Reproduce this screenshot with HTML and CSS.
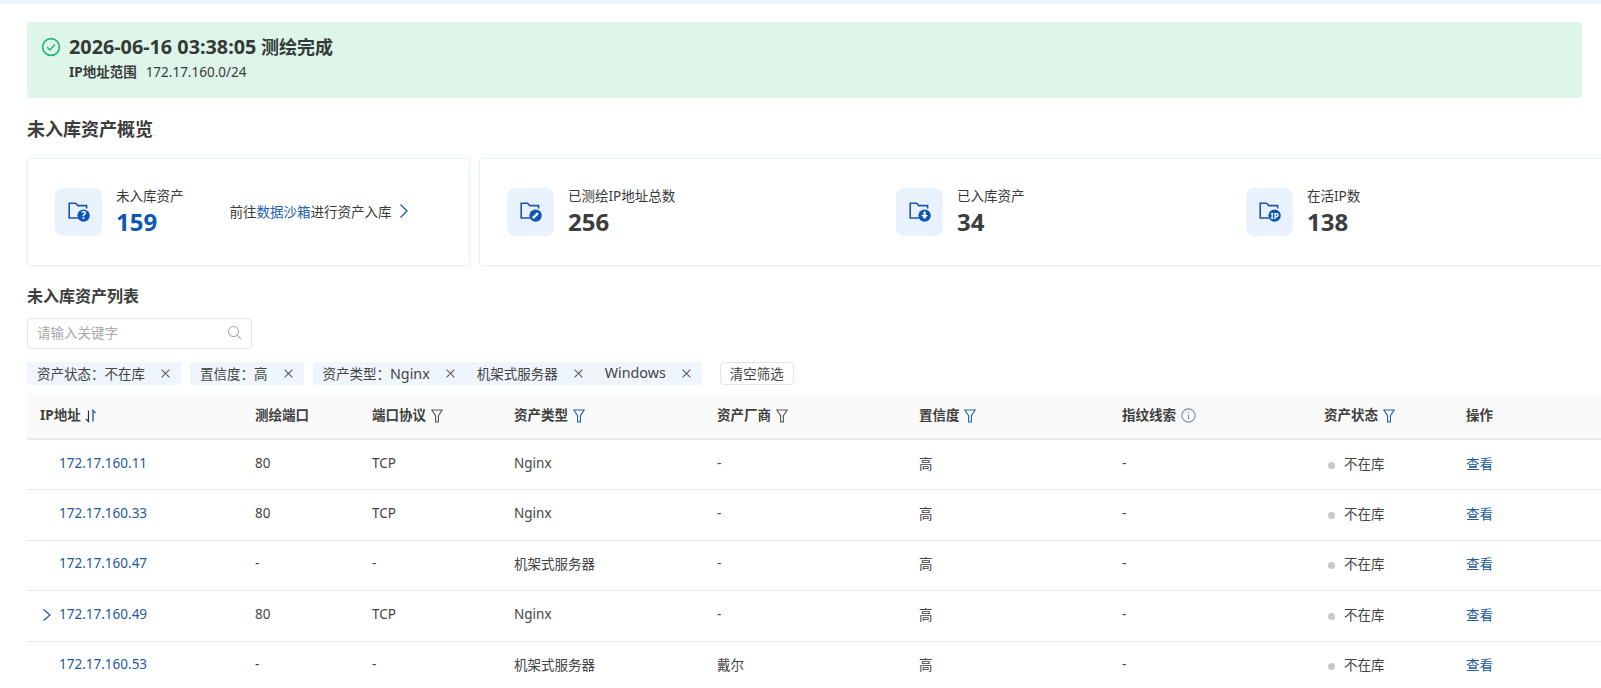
FILE: index.html
```html
<!DOCTYPE html>
<html lang="zh-CN">
<head>
    <meta charset="UTF-8">
    <title>测绘结果</title>
    <link rel="stylesheet" href="styles.css">
</head>
<body>
    <svg class="icon-defs" aria-hidden="true">
        <symbol id="folder" viewBox="0 0 22 20">
            <path d="M10 16H1.2V1.2H7.6L9.8 3.6H18.6V6.5" fill="none" stroke="currentColor" stroke-width="1.6"/>
        </symbol>
        <symbol id="filter" viewBox="0 0 12 14">
            <path d="M.8 1H11.2L7.4 6.6V13H4.6V6.6Z" fill="none" stroke="currentColor" stroke-width="1.1"/>
        </symbol>
    </svg>

    <div class="top-strip"></div>
    <div class="page">
        <div class="alert">
            <svg class="alert-icon" viewBox="0 0 20 20">
                <circle cx="10" cy="10" r="8.4" fill="none" stroke="#25b27c" stroke-width="1.6"/>
                <path d="M6.2 10.2L9 13L13.8 7.4" fill="none" stroke="#25b27c" stroke-width="1.5"/>
            </svg>
            <div>
                <div class="alert-title"><span class="alert-time">2026-06-16 03:38:05</span> 测绘完成</div>
                <div class="alert-sub"><b>IP地址范围</b><span>172.17.160.0/24</span></div>
            </div>
        </div>

        <h2 class="section-title overview-title">未入库资产概览</h2>

        <div class="card-row">
            <div class="card card-first">
                <div class="stat">
                    <div class="stat-icon">
                        <svg viewBox="0 0 22 20"><use href="#folder"/><circle cx="15.6" cy="13.6" r="6.2" fill="#0b56b8"/><text x="15.6" y="17.2" class="badge-text">?</text></svg>
                    </div>
                    <div>
                        <div class="stat-label">未入库资产</div>
                        <div class="stat-num blue">159</div>
                    </div>
                </div>
                <div class="goto">前往<a>数据沙箱</a>进行资产入库
                    <svg viewBox="0 0 10 16"><path d="M1.5 1.5L8 8L1.5 14.5" fill="none" stroke="#1a5fb4" stroke-width="1.4"/></svg>
                </div>
            </div>
            <div class="card card-second">
                <div class="stat stat-a">
                    <div class="stat-icon">
                        <svg viewBox="0 0 22 20"><use href="#folder"/><circle cx="15.6" cy="13.6" r="6.2" fill="#0b56b8"/><path d="M12.8 16.2L18 11.2" stroke="#fff" stroke-width="2.4"/></svg>
                    </div>
                    <div>
                        <div class="stat-label">已测绘IP地址总数</div>
                        <div class="stat-num">256</div>
                    </div>
                </div>
                <div class="stat stat-b">
                    <div class="stat-icon">
                        <svg viewBox="0 0 22 20"><use href="#folder"/><circle cx="15.6" cy="13.6" r="6.2" fill="#0b56b8"/><path d="M14.5 9.6H16.7V13H19L15.6 17L12.2 13H14.5Z" fill="#fff"/></svg>
                    </div>
                    <div>
                        <div class="stat-label">已入库资产</div>
                        <div class="stat-num">34</div>
                    </div>
                </div>
                <div class="stat">
                    <div class="stat-icon">
                        <svg viewBox="0 0 22 20"><use href="#folder"/><circle cx="15.6" cy="13.6" r="6.2" fill="#0b56b8"/><text x="15.6" y="16.6" class="badge-text ip-text">IP</text></svg>
                    </div>
                    <div>
                        <div class="stat-label">在活IP数</div>
                        <div class="stat-num">138</div>
                    </div>
                </div>
            </div>
        </div>

        <h2 class="section-title list-title">未入库资产列表</h2>

        <div class="search-box">
            <span>请输入关键字</span>
            <svg viewBox="0 0 16 16"><circle cx="7" cy="7" r="5.4" fill="none" stroke="#a8a8a8" stroke-width="1.1"/><path d="M11 11L15 15" stroke="#a8a8a8" stroke-width="1.1"/></svg>
        </div>

        <div class="filter-row">
            <div class="tag"><span>资产状态：不在库</span><i class="close"></i></div>
            <div class="tag"><span>置信度：高</span><i class="close"></i></div>
            <div class="tag"><span>资产类型：<span class="latin">Nginx</span></span><i class="close"></i><span>机架式服务器</span><i class="close"></i><span class="latin">Windows</span><i class="close"></i></div>
            <button class="clear-btn">清空筛选</button>
        </div>

        <table class="asset-table">
            <colgroup>
                <col class="c-ip"><col class="c-port"><col class="c-proto"><col class="c-wide"><col class="c-wide2"><col class="c-wide"><col class="c-wide2"><col class="c-proto"><col class="c-op">
            </colgroup>
            <thead>
                <tr>
                    <th>IP地址 <svg class="sort-icon" viewBox="0 0 12 14"><path d="M3.5 1.5V12.5L1 10" fill="none" stroke="#333" stroke-width="1.2"/><path d="M8 12.5V1.5L10.5 4" fill="none" stroke="#1a5fb4" stroke-width="1.4"/></svg></th>
                    <th>测绘端口</th>
                    <th>端口协议 <svg class="filter-icon"><use href="#filter"/></svg></th>
                    <th>资产类型 <svg class="filter-icon active"><use href="#filter"/></svg></th>
                    <th>资产厂商 <svg class="filter-icon"><use href="#filter"/></svg></th>
                    <th>置信度 <svg class="filter-icon active"><use href="#filter"/></svg></th>
                    <th>指纹线索 <svg class="info-icon" viewBox="0 0 14 14"><circle cx="7" cy="7" r="6.2" fill="none" stroke="#6f8fae" stroke-width="1"/><path d="M7 6V10.6M7 3.4V4.6" stroke="#6f8fae" stroke-width="1.1"/></svg></th>
                    <th>资产状态 <svg class="filter-icon active"><use href="#filter"/></svg></th>
                    <th>操作</th>
                </tr>
            </thead>
            <tbody>
                <tr>
                    <td class="ip">172.17.160.11</td><td>80</td><td>TCP</td><td>Nginx</td><td>-</td><td>高</td><td>-</td>
                    <td class="status"><i class="dot"></i>不在库</td><td><a class="view">查看</a></td>
                </tr>
                <tr>
                    <td class="ip">172.17.160.33</td><td>80</td><td>TCP</td><td>Nginx</td><td>-</td><td>高</td><td>-</td>
                    <td class="status"><i class="dot"></i>不在库</td><td><a class="view">查看</a></td>
                </tr>
                <tr>
                    <td class="ip">172.17.160.47</td><td>-</td><td>-</td><td>机架式服务器</td><td>-</td><td>高</td><td>-</td>
                    <td class="status"><i class="dot"></i>不在库</td><td><a class="view">查看</a></td>
                </tr>
                <tr>
                    <td class="ip has-arrow"><svg class="expand" viewBox="0 0 10 14"><path d="M1.5 1.5L8 7L1.5 12.5" fill="none" stroke="#1a5a9e" stroke-width="1.2"/></svg>172.17.160.49</td><td>80</td><td>TCP</td><td>Nginx</td><td>-</td><td>高</td><td>-</td>
                    <td class="status"><i class="dot"></i>不在库</td><td><a class="view">查看</a></td>
                </tr>
                <tr>
                    <td class="ip">172.17.160.53</td><td>-</td><td>-</td><td>机架式服务器</td><td>戴尔</td><td>高</td><td>-</td>
                    <td class="status"><i class="dot"></i>不在库</td><td><a class="view">查看</a></td>
                </tr>
            </tbody>
        </table>
    </div>
</body>
</html>
```

FILE: styles.css
```css
html, body {
    margin: 0;
    height: 688px;
    overflow: hidden;
    background-color: #fff;
    color: #3a3a3a;
    font-family: "Noto Sans", "Noto Sans CJK SC", sans-serif;
    font-size: 13.5px;
}
.icon-defs {
    display: none;
}
.top-strip {
    height: 4px;
    background-color: #f0f5fb;
}
.page {
    padding: 18px 19px 0 27px;
    width: 1555px;
}
.alert {
    display: flex;
    align-items: flex-start;
    gap: 8px;
    height: 76px;
    box-sizing: border-box;
    padding: 13px 14px;
    background-color: #def6e9;
    border-radius: 4px;
}
.alert-icon {
    width: 20px;
    height: 20px;
    margin-top: 2px;
}
.alert-title {
    font-size: 18px;
    font-weight: 700;
    line-height: 24px;
    color: #353a38;
}
.alert-time {
    font-size: 19.8px;
}
.alert-sub {
    margin-top: 4px;
    line-height: 18px;
}
.alert-sub b {
    margin-right: 9px;
    font-weight: 700;
}
.section-title {
    margin: 0;
    font-size: 18px;
    font-weight: 700;
    line-height: 24px;
    color: #3d3d3d;
}
.overview-title {
    margin-top: 19px;
}
.card-row {
    display: flex;
    gap: 9px;
    margin-top: 17px;
    width: 1640px;
}
.card {
    display: flex;
    align-items: center;
    height: 108px;
    box-sizing: border-box;
    padding-left: 27px;
    background-color: #fff;
    border: 1px solid #edf1f7;
    border-radius: 4px;
    box-shadow: 0 0 4px #f3f6fb;
}
.card-first {
    width: 443px;
    flex: none;
}
.card-second {
    flex: 1;
}
.stat {
    display: flex;
    align-items: center;
    gap: 14px;
}
.stat-a {
    width: 389px;
}
.stat-b {
    width: 350px;
}
.stat-icon {
    display: flex;
    align-items: center;
    justify-content: center;
    width: 47px;
    height: 48px;
    background-color: #e8f1fc;
    border-radius: 8px;
    color: #1a57ad;
}
.stat-icon svg {
    width: 22px;
    height: 20px;
}
.badge-text {
    fill: #fff;
    font-size: 10px;
    font-weight: 700;
    text-anchor: middle;
}
.ip-text {
    font-size: 8px;
}
.stat-label {
    line-height: 18px;
}
.stat-num {
    margin-top: 1px;
    font-size: 24px;
    font-weight: 700;
    line-height: 32px;
    color: #3d3d3d;
}
.stat-num.blue {
    color: #0b56b8;
}
.goto {
    display: flex;
    align-items: center;
    margin-left: 46px;
    padding-bottom: 3px;
    white-space: nowrap;
}
.goto a {
    color: #1a5fb4;
}
.goto svg {
    width: 10px;
    height: 16px;
    margin-left: 7px;
}
.list-title {
    margin-top: 18px;
    font-size: 16px;
}
.search-box {
    display: flex;
    align-items: center;
    justify-content: space-between;
    width: 225px;
    height: 31px;
    box-sizing: border-box;
    margin-top: 10px;
    padding: 0 9px 3px;
    border: 1px solid #e2e4e8;
    border-radius: 4px;
    color: #a9a9a9;
}
.search-box svg {
    width: 15px;
    height: 15px;
}
.filter-row {
    display: flex;
    align-items: center;
    gap: 9px;
    margin-top: 13px;
}
.tag {
    display: flex;
    align-items: center;
    height: 23px;
    box-sizing: border-box;
    padding: 0 9px 2px 10px;
    background-color: #eff5fc;
    border-radius: 3px;
    color: #444;
}
.latin {
    font-size: 14.3px;
}
.close {
    position: relative;
    display: block;
    width: 9px;
    height: 9px;
    margin: 2px 6px 0 16px;
}
.close::before, .close::after {
    content: "";
    position: absolute;
    left: 4px;
    top: -1px;
    width: 1px;
    height: 11px;
    background-color: #555;
    transform: rotate(45deg);
}
.close::after {
    transform: rotate(-45deg);
}
.tag .close + span {
    margin-left: 16px;
}
.tag .close:last-child {
    margin-right: 2px;
}
.clear-btn {
    height: 23px;
    margin-left: 9px;
    padding: 0 9px 2px;
    background-color: #fff;
    border: 1px solid #e2e4e8;
    border-radius: 4px;
    font-family: inherit;
    font-size: 13.5px;
    color: #444;
}
.asset-table {
    table-layout: fixed;
    width: 1574px;
    margin-top: 9px;
    border-collapse: collapse;
}
.c-ip { width: 215px; }
.c-port { width: 117px; }
.c-proto { width: 142px; }
.c-wide { width: 203px; }
.c-wide2 { width: 202px; }
.c-op { width: 148px; }
th {
    box-sizing: border-box;
    height: 45px;
    padding: 0 0 5px 13px;
    background-color: #fafafa;
    border-bottom: 2px solid #e8e9ec;
    text-align: left;
    font-size: 13.5px;
    font-weight: 700;
    color: #3f3f3f;
}
th svg {
    margin-left: 1px;
    vertical-align: -3px;
}
.sort-icon {
    width: 12px;
    height: 14px;
}
.filter-icon {
    width: 12px;
    height: 14px;
    color: #555;
}
.filter-icon.active {
    color: #1a5fb4;
}
.info-icon {
    width: 15px;
    height: 15px;
}
td {
    box-sizing: border-box;
    height: 50.5px;
    padding: 0 0 4px 13px;
    border-bottom: 1px solid #e9e9e9;
    color: #444;
}
td.ip {
    padding-left: 32px;
    color: #1e5a9c;
}
td.has-arrow {
    position: relative;
}
.expand {
    position: absolute;
    left: 15px;
    top: 17px;
    width: 10px;
    height: 14px;
}
.dot {
    display: inline-block;
    width: 7px;
    height: 7px;
    margin: 0 9px 0 4px;
    background-color: #c9c9c9;
    border-radius: 50%;
}
.view {
    color: #1e5a9c;
}
```
